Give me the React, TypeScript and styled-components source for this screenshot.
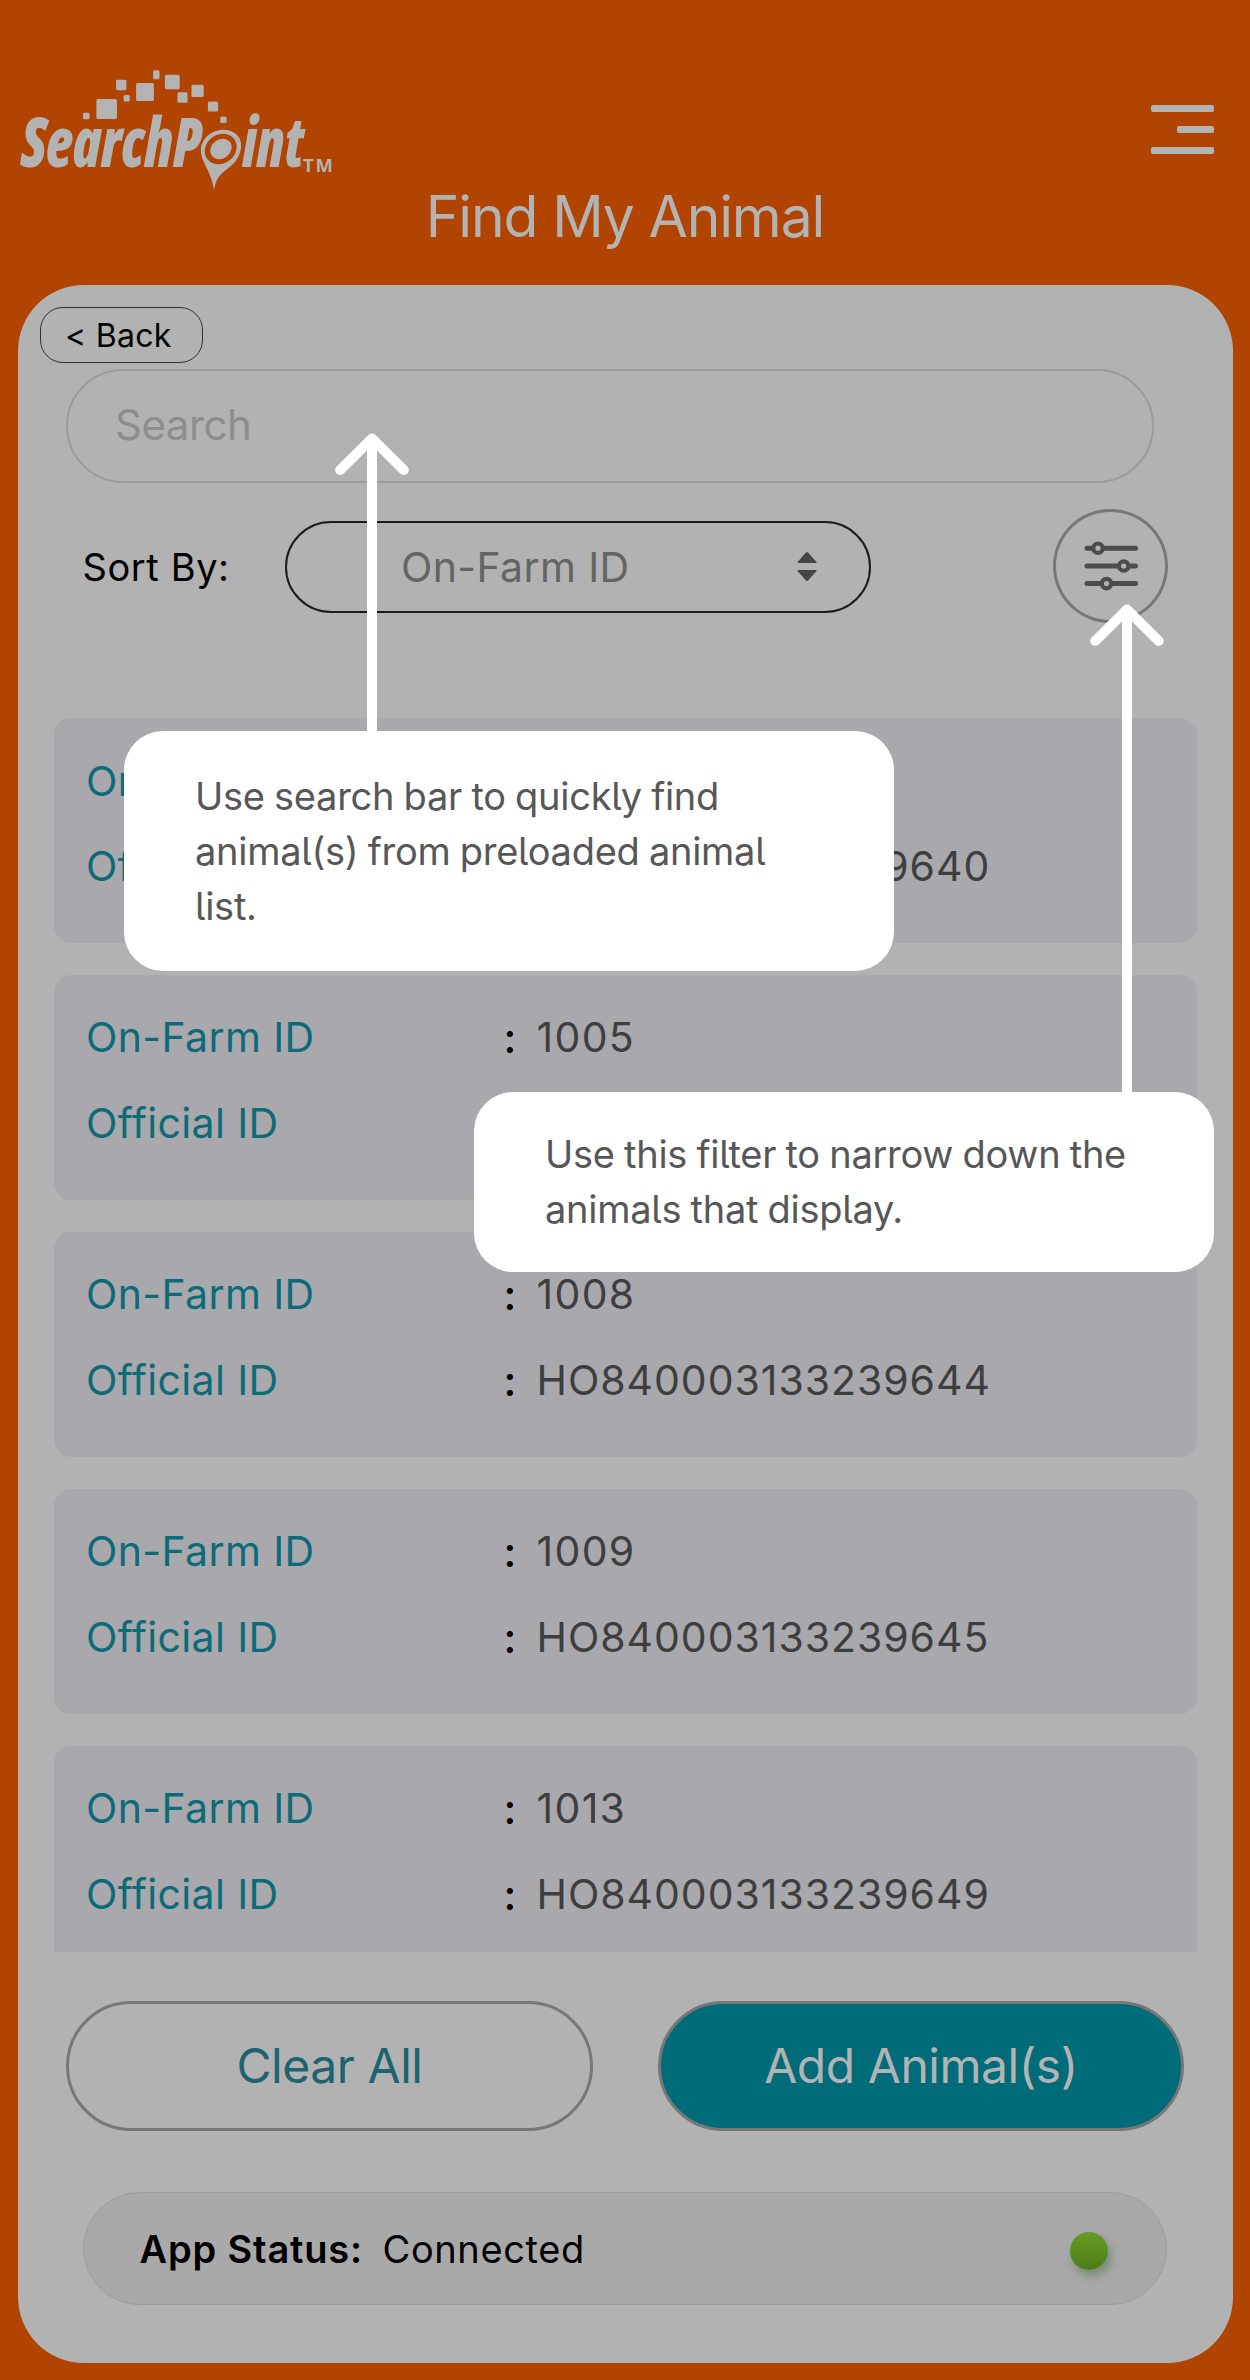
import React from 'react';
import styled, { createGlobalStyle } from 'styled-components';

const GlobalStyle = createGlobalStyle`
  * { box-sizing: border-box; }
  body {
    margin: 0;
    background: #b14400;
    font-family: Inter, "Liberation Sans", sans-serif;
  }
  button, input { font: inherit; }
`;

const Screen = styled.div`
  position: relative;
  display: flex;
  flex-direction: column;
  width: 1250px;
  height: 2380px;
  padding: 0 17.5px;
  background: #b14400;
  overflow: hidden;
`;

const Header = styled.header`
  height: 284.5px;
  padding-top: 65px;
`;

const TopBar = styled.div`
  display: flex;
  justify-content: space-between;
  height: 126.5px;
`;

const LogoSvg = styled.svg`
  display: block;
  width: 320px;
  height: 126px;
  margin-left: -2.5px;
  fill: #b3b3b3;
`;

const LogoText = styled.text`
  font: italic 800 69px "Open Sans", "Noto Sans", sans-serif;
  font-stretch: 75%;
`;

const TrademarkText = styled.text`
  font: 700 18.5px "Open Sans", "Noto Sans", sans-serif;
`;

const MenuButton = styled.button`
  display: flex;
  flex-direction: column;
  align-items: flex-end;
  gap: 14px;
  height: 49px;
  margin: 40px 18.5px 0 0;
  padding: 0;
  border: 0;
  background: none;
`;

const MenuLine = styled.span<{ $width: number }>`
  width: ${(p) => p.$width}px;
  height: 7px;
  border-radius: 2px;
  background: #b3b3b3;
`;

const Title = styled.h1`
  margin: 0;
  color: #b3b3b3;
  font-size: 57px;
  font-weight: 400;
  line-height: 50px;
  letter-spacing: -1.15px;
  text-align: center;
`;

const Panel = styled.main`
  display: flex;
  flex-direction: column;
  align-items: flex-start;
  width: 1215px;
  height: 2078px;
  padding-top: 22.5px;
  border-radius: 66px;
  background: #b2b2b2;
`;

const BackButton = styled.button`
  width: 163px;
  height: 56px;
  margin-left: 22.5px;
  padding: 0 0 0 24px;
  border: 1.5px solid #303030;
  border-radius: 23px;
  background: none;
  color: #000;
  font-size: 32px;
  letter-spacing: 0.3px;
  text-align: left;
`;

const SearchField = styled.input`
  width: 1088px;
  height: 114px;
  margin: 6px 0 0 48.5px;
  padding: 0 46px 3px 47px;
  border: 2px solid #9b9b9b;
  border-radius: 57px;
  background: none;
  font-size: 42px;
  letter-spacing: -0.5px;
  &::placeholder { color: #8d8d8d; opacity: 1; }
`;

const SortRow = styled.div`
  display: flex;
  align-items: center;
  height: 114px;
  margin: 25.5px 0 0 65px;
`;

const SortLabel = styled.span`
  width: 202.5px;
  padding-top: 3px;
  color: #000;
  font-size: 38px;
  letter-spacing: 0.6px;
`;

const Select = styled.div`
  display: flex;
  align-items: center;
  justify-content: space-between;
  width: 586px;
  height: 92px;
  margin: 2px 182px 0 0;
  padding: 0 52px 0 114px;
  border: 2px solid #1c1c1c;
  border-radius: 46px;
  color: #646464;
  font-size: 41px;
  letter-spacing: 0.37px;
`;

const FilterButton = styled.button`
  display: flex;
  align-items: center;
  justify-content: center;
  width: 115px;
  height: 114px;
  padding: 0 0 0 1px;
  border: 3px solid #777;
  border-radius: 50%;
  background: none;
`;

const List = styled.section`
  display: flex;
  flex-direction: column;
  gap: 32.3px;
  width: 1143px;
  height: 1233.7px;
  margin: 95.5px 0 0 36px;
  overflow: hidden;
`;

const Card = styled.article`
  display: flex;
  flex: none;
  flex-direction: column;
  gap: 34.7px;
  height: 224.7px;
  padding: 37.5px 34px 0 32.5px;
  border-radius: 17px;
  background: #a9a8ad;
`;

const Field = styled.div`
  display: grid;
  grid-template-columns: 417.5px 33px 1fr;
  font-size: 41px;
  line-height: 50px;
`;

const FieldName = styled.span`
  color: #0d6b78;
  letter-spacing: 0.37px;
  font-variant-ligatures: none;
`;

const Colon = styled.span`
  padding-top: 1px;
  color: #000;
  font-size: 42px;
  font-weight: 500;
`;

const FieldValue = styled.span<{ $spacing: number }>`
  color: #3e3e3e;
  letter-spacing: ${(p) => p.$spacing}px;
`;

const Actions = styled.div`
  display: flex;
  justify-content: space-between;
  width: 1118px;
  margin: 49px 0 0 48.5px;
`;

const ActionButton = styled.button<{ $primary?: boolean }>`
  width: ${(p) => (p.$primary ? 526 : 527)}px;
  height: 130px;
  padding: 0;
  border: 3px solid #777;
  border-radius: 65px;
  background: ${(p) => (p.$primary ? '#006b79' : 'none')};
  color: ${(p) => (p.$primary ? '#b3b3b3' : '#1d6370')};
  font-size: 48px;
  letter-spacing: -0.45px;
`;

const StatusBar = styled.div`
  display: flex;
  align-items: center;
  width: 1084px;
  height: 113px;
  margin: 61px 0 0 65.5px;
  padding: 1px 58.5px 0 55.5px;
  border: 1.5px solid #9e9e9e;
  border-radius: 56.5px;
  background: #a9a9a9;
  color: #000;
  font-size: 38px;
`;

const StatusLabel = styled.strong`
  width: 243px;
  font-weight: 600;
  letter-spacing: 0.82px;
`;

const StatusValue = styled.span`
  letter-spacing: 0.62px;
`;

const StatusDot = styled.span`
  width: 38px;
  height: 38px;
  margin: 4px 0 0 auto;
  border-radius: 50%;
  background: linear-gradient(#669c25, #4c7d16);
  box-shadow: 3px 6px 10px rgba(70, 110, 70, 0.5);
`;

const Callout = styled.aside<{ $x: number; $y: number; $w: number; $h: number }>`
  position: absolute;
  left: ${(p) => p.$x}px;
  top: ${(p) => p.$y}px;
  display: flex;
  align-items: center;
  width: ${(p) => p.$w}px;
  height: ${(p) => p.$h}px;
  padding-left: 71px;
  border-radius: 39px;
  background: #fff;
  color: #575757;
  font-size: 38px;
  line-height: 55px;
  letter-spacing: -0.28px;
  word-spacing: -1px;
  font-feature-settings: "cv05";
  white-space: pre;
`;

const Pointer = styled.svg<{ $x: number; $y: number }>`
  position: absolute;
  left: ${(p) => p.$x}px;
  top: ${(p) => p.$y}px;
  fill: none;
  stroke: #fff;
  stroke-width: 10;
`;

const squares = [
  [86.3, 116, 6.5, 6.5],
  [106.7, 109, 20.5, 20],
  [121.2, 85, 10.3, 10.3],
  [126.7, 98.3, 6.2, 6.6],
  [145, 92, 17.8, 18],
  [156.3, 74.8, 6.3, 9],
  [172.3, 82, 14.8, 14.5],
  [182.5, 97.5, 10.2, 10.3],
  [197.6, 90.8, 12.2, 12.2],
  [213, 106.5, 10.2, 10.2],
  [223.4, 119.7, 6.4, 6.4],
];

function Logo() {
  return (
    <LogoSvg viewBox="15 65 320 126">
      {squares.map(([cx, cy, w, h]) => (
        <rect key={cx} x={cx - w / 2} y={cy - h / 2} width={w} height={h} rx={1.5} />
      ))}
      <LogoText x="21" y="167" textLength="180" lengthAdjust="spacingAndGlyphs">SearchP</LogoText>
      <LogoText x="242.500" y="167" textLength="61" lengthAdjust="spacingAndGlyphs">int</LogoText>
      <mask id="pin-hole">
        <rect x="190" y="120" width="60" height="75" fill="#fff" />
        <ellipse cx="220.700" cy="149" rx="16.800" ry="14.400" transform="rotate(-38 220.700 149)" fill="#000" />
      </mask>
      <path
        mask="url(#pin-hole)"
        d="M223.500 129.700C233.500 129.700 241.300 136 241.200 145.500C241 152.500 238 159 233 164C227.500 169 220.500 173.500 217.500 179C215.800 182 215 185 214.400 188.500H213.500C213 184.500 211.800 179.500 210 175.500C208.500 171.500 206.500 168 204.500 163.500C202.300 158.500 200.700 155 200.900 149.500C201.500 138.500 211.500 129.700 223.500 129.700Z"
      />
      <ellipse cx="221" cy="149" rx="11.300" ry="9.500" transform="rotate(-38 221 149)" />
      <TrademarkText x="303" y="172" textLength="30" lengthAdjust="spacing">TM</TrademarkText>
    </LogoSvg>
  );
}

function SortIcon() {
  return (
    <svg width="20" height="32" viewBox="0 0 20 32" fill="#464646">
      <path d="M9 1.500q1-1 2 0l8.500 9.500v1h-19v-1zM9 29.500q1 1 2 0l8.500-9.500v-1h-19v1z" />
    </svg>
  );
}

function FilterIcon() {
  const rows = [
    [5.2, 14],
    [23, 39.7],
    [40.6, 22.5],
  ];
  return (
    <svg width="54" height="50" viewBox="0 -2 54 50" fill="none" stroke="#4c4c4c" strokeWidth="5">
      {rows.map(([y, x]) => (
        <g key={y}>
          <path d={`M3 ${y}H${x - 5}M${x + 5} ${y}H51.500`} strokeLinecap="round" />
          <circle cx={x} cy={y} r="4.700" strokeWidth="4.200" fill="#b2b2b2" />
        </g>
      ))}
    </svg>
  );
}

function Arrow({ x, y, height }: { x: number; y: number; height: number }) {
  return (
    <Pointer $x={x - 40} $y={y} width={80} height={height} viewBox={`0 0 80 ${height}`}>
      <path d={`M40 7V${height}`} />
      <path d="M8.200 37L40 5.500L71.800 37" strokeLinecap="round" strokeLinejoin="round" />
    </Pointer>
  );
}

const animals = [
  { farm: '1004', official: 'HO840003133239640' },
  { farm: '1005', official: 'HO840003133239641' },
  { farm: '1008', official: 'HO840003133239644' },
  { farm: '1009', official: 'HO840003133239645' },
  { farm: '1013', official: 'HO840003133239649' },
];

export default function App() {
  return (
    <Screen>
      <GlobalStyle />
      <Header>
        <TopBar>
          <Logo />
          <MenuButton aria-label="Menu">
            <MenuLine $width={63.5} />
            <MenuLine $width={37.5} />
            <MenuLine $width={63.5} />
          </MenuButton>
        </TopBar>
        <Title>Find My Animal</Title>
      </Header>
      <Panel>
        <BackButton>&lt; Back</BackButton>
        <SearchField placeholder="Search" />
        <SortRow>
          <SortLabel>Sort By:</SortLabel>
          <Select>
            On-Farm ID
            <SortIcon />
          </Select>
          <FilterButton aria-label="Filter">
            <FilterIcon />
          </FilterButton>
        </SortRow>
        <List>
          {animals.map((a) => (
            <Card key={a.farm}>
              <Field>
                <FieldName>On-Farm ID</FieldName>
                <Colon>:</Colon>
                <FieldValue $spacing={1.3}>{a.farm}</FieldValue>
              </Field>
              <Field>
                <FieldName>Official ID</FieldName>
                <Colon>:</Colon>
                <FieldValue $spacing={0.96}>{a.official}</FieldValue>
              </Field>
            </Card>
          ))}
        </List>
        <Actions>
          <ActionButton>Clear All</ActionButton>
          <ActionButton $primary>Add Animal(s)</ActionButton>
        </Actions>
        <StatusBar>
          <StatusLabel>App Status:</StatusLabel>
          <StatusValue>Connected</StatusValue>
          <StatusDot />
        </StatusBar>
      </Panel>
      <Arrow x={372} y={433} height={300} />
      <Arrow x={1127} y={604} height={490} />
      <Callout $x={124} $y={731} $w={770} $h={240}>
        {'Use search bar to quickly find\nanimal(s) from preloaded animal\nlist.'}
      </Callout>
      <Callout $x={474} $y={1092} $w={740} $h={180}>
        {'Use this filter to narrow down the\nanimals that display.'}
      </Callout>
    </Screen>
  );
}
